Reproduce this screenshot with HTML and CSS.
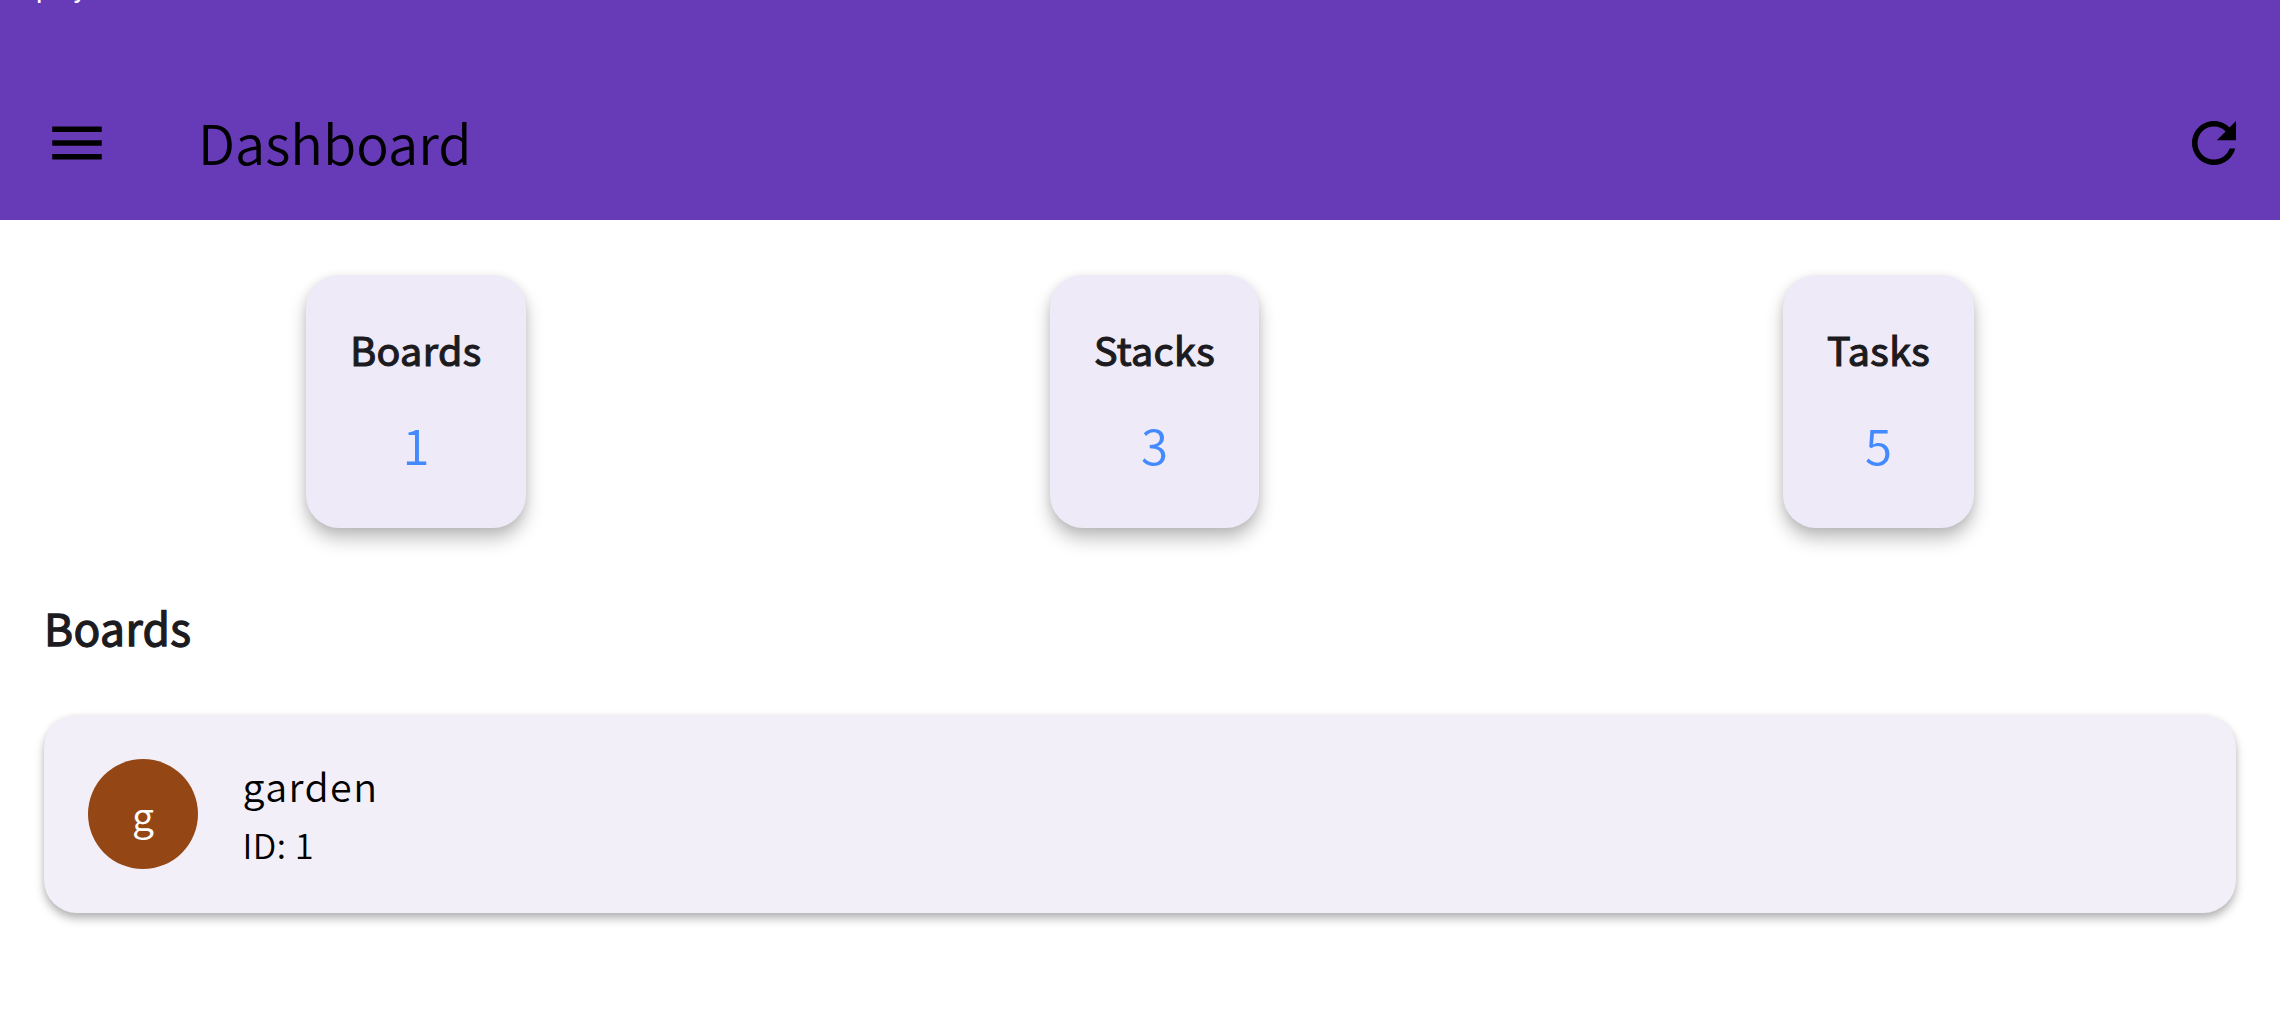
FILE: index.html
```html
<!DOCTYPE html>
<html lang="en">
<head>
<meta charset="utf-8">
<title>Dashboard</title>
<link rel="stylesheet" href="styles.css">
</head>
<body>
<header class="app-header">
  <div class="status-bar"><span class="status-text">play</span></div>
  <div class="toolbar">
    <svg class="icon" viewBox="0 0 24 24"><path d="M3 18h18v-2H3v2zm0-5h18v-2H3v2zm0-7v2h18V6H3z"/></svg>
    <h1 class="title">Dashboard</h1>
    <svg class="icon" viewBox="0 0 24 24"><path d="M17.65 6.35C16.2 4.9 14.21 4 12 4c-4.42 0-7.99 3.58-7.99 8s3.57 8 7.99 8c3.73 0 6.84-2.55 7.73-6h-2.08c-.82 2.33-3.04 4-5.65 4-3.31 0-6-2.69-6-6s2.69-6 6-6c1.66 0 3.14.69 4.22 1.78L13 11h7V4l-2.35 2.35z"/></svg>
  </div>
</header>
<main class="content">
  <section class="stats">
    <div class="stat boards"><div class="stat-label">Boards</div><div class="stat-value">1</div></div>
    <div class="stat stacks"><div class="stat-label">Stacks</div><div class="stat-value">3</div></div>
    <div class="stat tasks"><div class="stat-label">Tasks</div><div class="stat-value">5</div></div>
  </section>
  <h2 class="section-title">Boards</h2>
  <article class="board">
    <div class="avatar">g</div>
    <div class="board-text">
      <div class="board-name">garden</div>
      <div class="board-id">ID: 1</div>
    </div>
  </article>
</main>
</body>
</html>
```
FILE: styles.css
```css
* { box-sizing: border-box; }
body {
  margin: 0;
  height: 1036px;
  overflow: hidden;
  background: #fff;
  color: #1c1b1f;
  font-family: "Noto Sans CJK JP", "Noto Sans", sans-serif;
  font-weight: 350;
}
.app-header { height: 220px; background: #673ab7; color: #000; }
.status-bar { height: 66px; overflow: hidden; padding-left: 36px; }
.status-text {
  display: block;
  margin-top: -28px;
  font: 400 28px/32px Roboto, sans-serif;
  color: #fff;
}
.toolbar { height: 154px; display: flex; align-items: center; padding: 0 33px 0 44px; }
.icon { width: 66px; height: 66px; fill: #000; flex: none; }
.title { flex: 1; margin: 0 0 0 88px; padding-bottom: 2px; font-size: 54.2px; line-height: 76px; font-weight: 350; }
.content { padding: 55px 44px 0; }
.stats { display: flex; justify-content: space-around; }
.stat {
  flex: none;
  height: 253px;
  padding-top: 44px;
  border-radius: 33px;
  background: #eeeaf7;
  text-align: center;
  box-shadow: 0 11px 18px rgba(0,0,0,.24), 0 2px 10px rgba(0,0,0,.09);
}
.boards { width: 220px; }
.stacks { width: 209.5px; }
.tasks { width: 191px; }
.stat-label {
  font-size: 39.4px;
  line-height: 60px;
  font-weight: 400;
  letter-spacing: .4px;
  -webkit-text-stroke: 1.2px currentColor;
}
.stat-value { margin-top: 30px; font-size: 49.2px; line-height: 70px; color: #448aff; }
.section-title {
  margin: 63px 0 51px;
  font-size: 44.3px;
  line-height: 73px;
  font-weight: 400;
  letter-spacing: .4px;
  -webkit-text-stroke: 1.3px currentColor;
}
.board {
  height: 198px;
  display: flex;
  align-items: center;
  padding: 0 44px;
  border-radius: 33px;
  background: #f2eff9;
  color: #000;
  box-shadow: 0 6px 10px rgba(0,0,0,.26), 0 1px 6px rgba(0,0,0,.08);
}
.avatar {
  width: 110px;
  height: 110px;
  border-radius: 50%;
  background: #944714;
  color: #fff;
  font-size: 39.4px;
  line-height: 110px;
  text-align: center;
}
.board-text { margin-left: 44.5px; padding-bottom: 3px; }
.board-name { font-size: 39.4px; line-height: 62px; letter-spacing: 1.4px; }
.board-id { font-size: 34.4px; line-height: 56px; letter-spacing: .5px; }
```
